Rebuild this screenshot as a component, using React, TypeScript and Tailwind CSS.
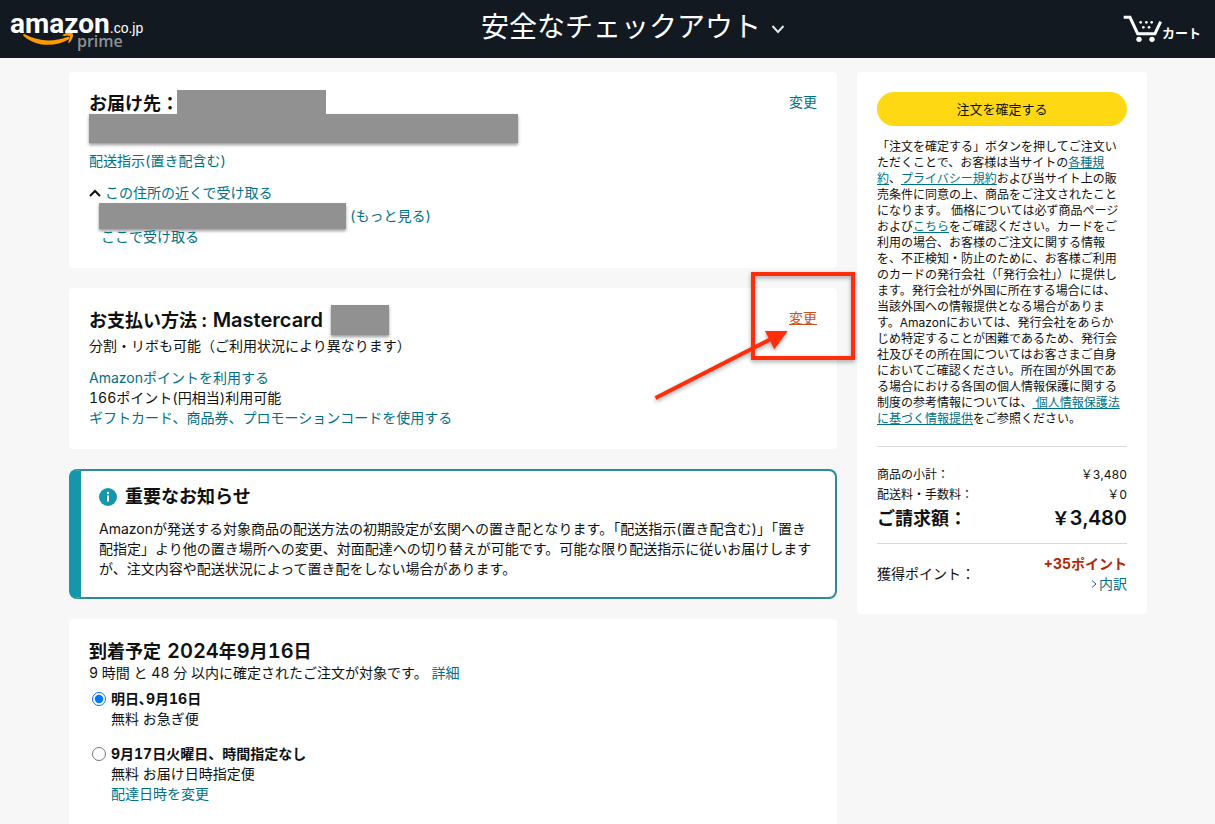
import { useState } from 'react';
import type { ReactNode } from 'react';

interface DeliveryOption {
  id: string;
  date: string;
  method: string;
  changeLabel?: string;
}

const DELIVERY_OPTIONS: DeliveryOption[] = [
  { id: 'next-day',  date: '明日､9月16日',                 method: '無料 お急ぎ便' },
  { id: 'scheduled', date: '9月17日火曜日、時間指定なし', method: '無料 お届け日時指定便', changeLabel: '配達日時を変更' },
];

const LINK = 'text-[#007185] hover:underline';

function Link({ className = LINK, children }: { className?: string; children: ReactNode }) {
  return <a href="#" className={className}>{children}</a>;
}

function Redacted({ className }: { className: string }) {
  return <span aria-hidden="true" className={`block shrink-0 bg-[#919191] ${className}`} />;
}

function Logo() {
  return (
    <a href="#" className="relative flex h-[58px] items-baseline pt-1.5 text-white">
      <span className="font-[Roboto,sans-serif] text-[28px] leading-9 font-bold">amazon</span>
      <span className="font-['Liberation_Sans',sans-serif] text-sm">.co.jp</span>
      <svg viewBox="0 0 156 40" className="absolute top-[33px] left-3 h-[13px] w-[52px]" fill="#ff9900" aria-hidden="true">
        <path d="M3 9C0 4 3 1 7 4C48 27 96 28 137 12C145 9 147 16 141 20C100 44 42 43 3 9Z" />
        <path d="M124 5Q138 -4 154 1Q158 14 144 30Q139 32 141 25Q147 13 145 9Q140 6 128 9Q121 9 124 5Z" />
      </svg>
      <span className="absolute top-[31px] left-[67px] font-['Open_Sans',sans-serif] text-base leading-5 font-semibold text-[#8d9196]">
        prime
      </span>
    </a>
  );
}

function Header() {
  return (
    <header className="flex h-[58px] items-center justify-between bg-[#131921] px-2.5 text-white">
      <Logo />
      <button type="button" className="flex items-center gap-2.5 text-[28px] leading-10">
        <h1 className="pb-1">安全なチェックアウト</h1>
        <svg viewBox="0 0 14 10" className="h-2.5 w-3.5" fill="none" stroke="#e3e6e6" strokeWidth="2" aria-hidden="true">
          <path d="M1.500 2 7 8l5.500-6" />
        </svg>
      </button>
      <a href="#" className="flex items-center pr-1 text-[13px] font-bold">
        <svg viewBox="0 0 117 84" className="h-7 w-[39px]" fill="#fff" aria-hidden="true">
          <path d="M2 7h19l23 49h52l17-36" fill="none" stroke="#fff" strokeWidth="9" />
          <circle cx="48" cy="73" r="8" />
          <circle cx="87" cy="73" r="8" />
          <circle cx="53" cy="22" r="4" />
          <circle cx="70" cy="22" r="4" />
          <circle cx="86" cy="22" r="4" />
          <circle cx="61" cy="37" r="4" />
          <circle cx="78" cy="37" r="4" />
        </svg>
        <span className="pt-2">カート</span>
      </a>
    </header>
  );
}

function AddressCard() {
  return (
    <section className="flex items-start justify-between rounded-sm bg-white px-5 pt-[18px] pb-[23px]">
      <div>
        <div className="flex h-6 items-start">
          <h2 className="w-[88px] pt-0.5 text-lg leading-6 font-bold whitespace-nowrap">お届け先：</h2>
          <Redacted className="h-6 w-[149px]" />
        </div>
        <Redacted className="h-[29px] w-[429px] shadow-[0_2px_3px_rgba(0,0,0,0.4)]" />
        <p className="mt-2"><Link>配送指示(置き配含む)</Link></p>
        <p className="mt-3 flex items-center gap-1">
          <svg viewBox="0 0 12 8" className="h-2 w-3" fill="none" stroke="#0f1111" strokeWidth="2" aria-hidden="true">
            <path d="M1 7 6 2l5 5" />
          </svg>
          <Link>この住所の近くで受け取る</Link>
        </p>
        <div className="flex items-center gap-1 pl-2.5">
          <Redacted className="h-[26px] w-[247px] shadow-[0_2px_3px_rgba(0,0,0,0.4)]" />
          <Link>(もっと見る)</Link>
        </div>
        <p className="pl-3 leading-4"><Link>ここで受け取る</Link></p>
      </div>
      <p className="pt-0.5"><Link>変更</Link></p>
    </section>
  );
}

function PaymentCard() {
  return (
    <section className="relative flex items-start justify-between rounded-sm bg-white px-5 pt-[17px] pb-[21px]">
      <div>
        <div className="flex items-center gap-2">
          <h2 className="flex items-baseline gap-1.5 text-lg leading-6 font-bold">
            お支払い方法 : <span className="text-xl leading-6 font-semibold">Mastercard</span>
          </h2>
          <Redacted className="h-[30px] w-[58px] shadow-[0_2px_3px_rgba(0,0,0,0.4)]" />
        </div>
        <p className="mt-px">分割・リボも可能（ご利用状況により異なります）</p>
        <p className="mt-3"><Link>Amazonポイントを利用する</Link></p>
        <p>166ポイント(円相当)利用可能</p>
        <p><Link>ギフトカード、商品券、プロモーションコードを使用する</Link></p>
      </div>
      <p className="pt-[3px]"><Link className="text-[#c7511f] underline">変更</Link></p>

      {/* Callout pointing at the change link */}
      <svg
        viewBox="0 0 210 140"
        className="pointer-events-none absolute -top-5 -right-[23px] z-10 h-[140px] w-[210px] drop-shadow-[0_2px_2px_rgba(0,0,0,0.35)]"
        fill="none"
        stroke="#ff2d0a"
        strokeWidth="4"
        aria-hidden="true"
      >
        <rect x="103" y="6" width="100" height="84" />
        <path d="M5.500 130 121 71" />
        <path d="M115 63h22.700l-13.400 18.300z" fill="#ff2d0a" stroke="none" />
      </svg>
    </section>
  );
}

function Notice() {
  return (
    <section className="rounded-lg border-2 border-l-12 border-[#2a8c98] border-l-[#1597ab] bg-white px-[18px] pt-3.5 pb-[18px]">
      <h2 className="flex items-center gap-2 text-lg leading-6 font-bold">
        <svg viewBox="0 0 18 18" className="size-[18px]" aria-hidden="true">
          <circle cx="9" cy="9" r="9" fill="#1597ab" />
          <circle cx="9" cy="5" r="1.200" fill="#fff" />
          <path d="M9 7.500v6" stroke="#fff" strokeWidth="2" />
        </svg>
        重要なお知らせ
      </h2>
      <p className="mt-2.5">
        Amazonが発送する対象商品の配送方法の初期設定が玄関への置き配となります。「配送指示(置き配含む)」「置き配指定」より他の置き場所への変更、対面配達への切り替えが可能です。可能な限り配送指示に従いお届けしますが、注文内容や配送状況によって置き配をしない場合があります。
      </p>
    </section>
  );
}

function DeliveryCard() {
  const [selected, setSelected] = useState('next-day');

  return (
    <section className="flex-1 rounded-t-sm bg-white p-5">
      <h2 className="flex h-6 items-baseline text-lg leading-6 font-bold">
        <span className="mr-1.5">到着予定</span>
        <span className="text-xl leading-6 font-semibold">2024</span>年
        <span className="text-xl leading-6 font-semibold">9</span>月
        <span className="text-xl leading-6 font-semibold">16</span>日
      </h2>
      <p>
        9 時間 と 48 分 以内に確定されたご注文が対象です。 <Link>詳細</Link>
      </p>
      <div role="radiogroup" aria-label="配送オプション" className="mt-1.5 flex flex-col gap-[15px]">
        {DELIVERY_OPTIONS.map(option => (
          <div key={option.id} className="flex gap-[5px] pl-[3px]">
            <input
              type="radio"
              id={option.id}
              name="delivery"
              checked={selected === option.id}
              onChange={() => setSelected(option.id)}
              className="mt-[3px] size-3.5"
            />
            <div>
              <label htmlFor={option.id} className="block">
                <span className="block font-bold">{option.date}</span>
                <span className="block">{option.method}</span>
              </label>
              {option.changeLabel && <Link>{option.changeLabel}</Link>}
            </div>
          </div>
        ))}
      </div>
    </section>
  );
}

function OrderSummary() {
  const inlineLink = 'text-[#007185] underline';

  return (
    <aside className="w-[290px] shrink-0 self-start rounded-sm bg-white p-5">
      <button type="button" className="h-[34px] w-full rounded-full bg-[#ffd814] text-[13px] hover:bg-[#f7ca00]">
        注文を確定する
      </button>
      <p className="mt-[13px] pr-1 text-xs leading-4">
        「注文を確定する」ボタンを押してご注文いただくことで、お客様は当サイトの<Link className={inlineLink}>各種規約</Link>、<Link className={inlineLink}>プライバシー規約</Link>および当サイト上の販売条件に同意の上、商品をご注文されたことになります。 価格については必ず商品ページおよび<Link className={inlineLink}>こちら</Link>をご確認ください。カードをご利用の場合、お客様のご注文に関する情報を、不正検知・防止のために、お客様ご利用のカードの発行会社（「発行会社」）に提供します。発行会社が外国に所在する場合には、当該外国への情報提供となる場合があります。Amazonにおいては、発行会社をあらかじめ特定することが困難であるため、発行会社及びその所在国についてはお客さまご自身においてご確認ください。所在国が外国である場合における各国の個人情報保護に関する制度の参考情報については、<Link className={inlineLink}> 個人情報保護法に基づく情報提供</Link>をご参照ください。
      </p>

      <div className="mt-[19px] border-t border-[#d5d9d9] pt-[18px] pb-2.5">
        <table className="w-full text-xs leading-5">
          <tbody>
            <tr>
              <th scope="row" className="text-left font-normal">商品の小計：</th>
              <td className="text-right">￥3,480</td>
            </tr>
            <tr>
              <th scope="row" className="text-left font-normal">配送料・手数料：</th>
              <td className="text-right">￥0</td>
            </tr>
            <tr className="text-lg leading-7 font-bold">
              <th scope="row" className="text-left">ご請求額：</th>
              <td className="text-right">￥<span className="text-xl leading-6 font-semibold">3,480</span></td>
            </tr>
          </tbody>
        </table>
      </div>

      <div className="flex items-center justify-between border-t border-[#d5d9d9] pt-2.5">
        <span>獲得ポイント：</span>
        <div className="text-right">
          <p className="font-bold text-[#b12704]">+35ポイント</p>
          <a href="#" className="flex items-center justify-end gap-0.5 text-[#007185]">
            <svg viewBox="0 0 6 10" className="h-2.5 w-1.5" fill="none" stroke="currentColor" aria-hidden="true">
              <path d="M1 1.500 5 5 1 8.500" />
            </svg>
            内訳
          </a>
        </div>
      </div>
    </aside>
  );
}

export default function App() {
  return (
    <div lang="ja" className="flex min-h-screen flex-col bg-[#f7f7f7] font-[Inter,'Noto_Sans_CJK_JP',sans-serif] text-sm leading-5 text-[#0f1111] tabular-nums">
      <Header />
      <main className="mx-auto flex w-full max-w-[1215px] flex-1 gap-5 pt-3.5 pr-[68px] pl-[69px]">
        <div className="flex min-w-0 flex-1 flex-col gap-5">
          <AddressCard />
          <PaymentCard />
          <Notice />
          <DeliveryCard />
        </div>
        <OrderSummary />
      </main>
    </div>
  );
}
